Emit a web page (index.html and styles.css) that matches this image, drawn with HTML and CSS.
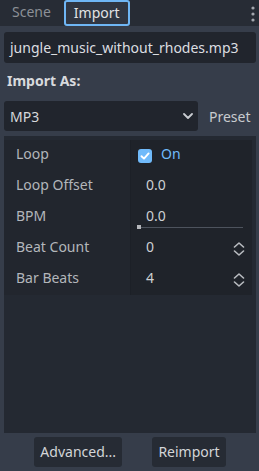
FILE: index.html
```html
<!DOCTYPE html>
<html>
<head>
<meta charset="utf-8">
<link rel="stylesheet" href="styles.css">
</head>
<body>
<div class="dock">
  <div class="tabbar">
    <div class="tab">Scene</div>
    <div class="tab active">Import</div>
    <div class="spacer"></div>
    <svg class="kebab" width="6" height="20" viewBox="0 0 6 20"><circle cx="3" cy="5" r="1.6"/><circle cx="3" cy="11" r="1.6"/><circle cx="3" cy="17" r="1.6"/></svg>
  </div>
  <div class="content">
    <div class="file-field">jungle_music_without_rhodes.mp3</div>
    <div class="section-label">Import As:</div>
    <div class="import-row">
      <div class="option-btn"><span>MP3</span><svg class="chev" width="10" height="6" viewBox="0 0 10 6"><path d="M1 1 L5 5 L9 1" fill="none" stroke="#c9ccd1" stroke-width="1.8" stroke-linecap="round" stroke-linejoin="round"/></svg></div>
      <span class="preset">Preset</span>
    </div>
    <div class="panel">
      <div class="props">
        <div class="prop-label">Loop</div>
        <div class="prop-value check-cell"><span class="checkbox"><svg width="14" height="14" viewBox="0 0 14 14"><path d="M3.5 7.2 L6 9.6 L10.6 4.4" fill="none" stroke="#ffffff" stroke-width="1.9" stroke-linecap="round" stroke-linejoin="round"/></svg></span><span class="on">On</span></div>

        <div class="prop-label">Loop Offset</div>
        <div class="prop-value"><span class="num">0.0</span></div>

        <div class="prop-label">BPM</div>
        <div class="prop-value slider-cell"><span class="num">0.0</span><div class="slider"><div class="grabber"></div></div></div>

        <div class="prop-label">Beat Count</div>
        <div class="prop-value spin-cell"><span class="num">0</span><svg class="updown" width="12" height="14" viewBox="0 0 12 14"><path d="M1.5 5 L6 1 L10.5 5 M1.5 9 L6 13 L10.5 9" fill="none" stroke="#b9bcc1" stroke-width="1.6" stroke-linecap="round" stroke-linejoin="round"/></svg></div>

        <div class="prop-label">Bar Beats</div>
        <div class="prop-value spin-cell"><span class="num">4</span><svg class="updown" width="12" height="14" viewBox="0 0 12 14"><path d="M1.5 5 L6 1 L10.5 5 M1.5 9 L6 13 L10.5 9" fill="none" stroke="#b9bcc1" stroke-width="1.6" stroke-linecap="round" stroke-linejoin="round"/></svg></div>
      </div>
    </div>
    <div class="actions">
      <div class="btn">Advanced...</div>
      <div class="btn">Reimport</div>
    </div>
  </div>
</div>
</body>
</html>
```

FILE: styles.css
```css
html, body {
  margin: 0;
  padding: 0;
  background: #363d4a;
}
body {
  font-family: "Noto Sans", "DejaVu Sans", sans-serif;
  font-size: 14px;
  color: #d6d8db;
}
.dock {
  width: 259px;
  height: 471px;
  display: flex;
  flex-direction: column;
  overflow: hidden;
}
.tabbar {
  height: 26px;
  flex: none;
  background: #272c35;
  display: flex;
  align-items: stretch;
  padding-left: 2px;
  gap: 3px;
  box-sizing: border-box;
}
.tab {
  padding: 0 8px;
  border: 2px solid transparent;
  border-top: 0;
  border-radius: 0 0 3px 3px;
  line-height: 24px;
  color: #8c9097;
}
.tab.active {
  border: 2px solid #6fb6f5;
  border-radius: 3px;
  line-height: 22px;
  background: #303642;
  color: #e2e3e5;
}
.spacer { flex: 1; }
.kebab {
  fill: #a2a6ad;
  margin-right: 3px;
  align-self: center;
}
.content {
  flex: 1;
  display: flex;
  flex-direction: column;
  padding: 0 3px 0 4px;
}
.file-field {
  margin-top: 6px;
  height: 31px;
  line-height: 31px;
  background: #21252d;
  border-radius: 3px;
  padding-left: 6px;
  color: #dcdee1;
  white-space: nowrap;
  overflow: hidden;
}
.section-label {
  height: 38px;
  box-sizing: border-box;
  padding: 8px 0 0 3px;
  line-height: 19px;
  font-weight: bold;
  color: #d8dadd;
}
.import-row {
  display: flex;
  align-items: center;
  gap: 11px;
  height: 30px;
}
.option-btn {
  width: 194px;
  height: 30px;
  box-sizing: border-box;
  background: #21252d;
  border-radius: 3px;
  display: flex;
  align-items: center;
  justify-content: space-between;
  padding: 0 5px 0 6px;
  color: #d6d8db;
}
.preset {
  color: #c9cbcf;
}
.panel {
  flex: 1;
  margin-top: 5px;
  background: #242932;
  padding: 4px 4px 0 0;
}
.props {
  display: grid;
  grid-template-columns: 127px 121px;
  grid-auto-rows: 31px;
  background: #20242c;
}
.prop-label {
  padding: 0 0 4px 12px;
  line-height: 27px;
  color: #b3b6bb;
  background: #22262e;
  border-right: 1px solid #1c2027;
}
.prop-value {
  position: relative;
  display: flex;
  align-items: center;
  padding: 0 0 4px 15px;
  line-height: 27px;
  color: #cdd0d3;
  background: #1f232a;
}
.check-cell {
  padding-left: 7px;
  padding-bottom: 0;
}
.checkbox {
  width: 14px;
  height: 14px;
  border-radius: 3px;
  background: #70bafa;
  display: flex;
}
.on {
  color: #70bafa;
  margin-left: 9px;
  padding-bottom: 4px;
}
.slider {
  position: absolute;
  left: 6px;
  right: 9px;
  top: 25px;
  height: 1px;
  background: #4d535d;
}
.grabber {
  position: absolute;
  left: 0;
  top: -2px;
  width: 4px;
  height: 4px;
  background: #b5b7bb;
}
.spin-cell {
  justify-content: space-between;
  padding-right: 7px;
}
.updown {
  margin-top: 4px;
}
.actions {
  height: 38px;
  flex: none;
  display: flex;
  justify-content: space-evenly;
  align-items: center;
}
.btn {
  height: 30px;
  line-height: 30px;
  padding: 0 6px;
  background: #262b34;
  border-radius: 3px;
  color: #d3d5d8;
}
```
